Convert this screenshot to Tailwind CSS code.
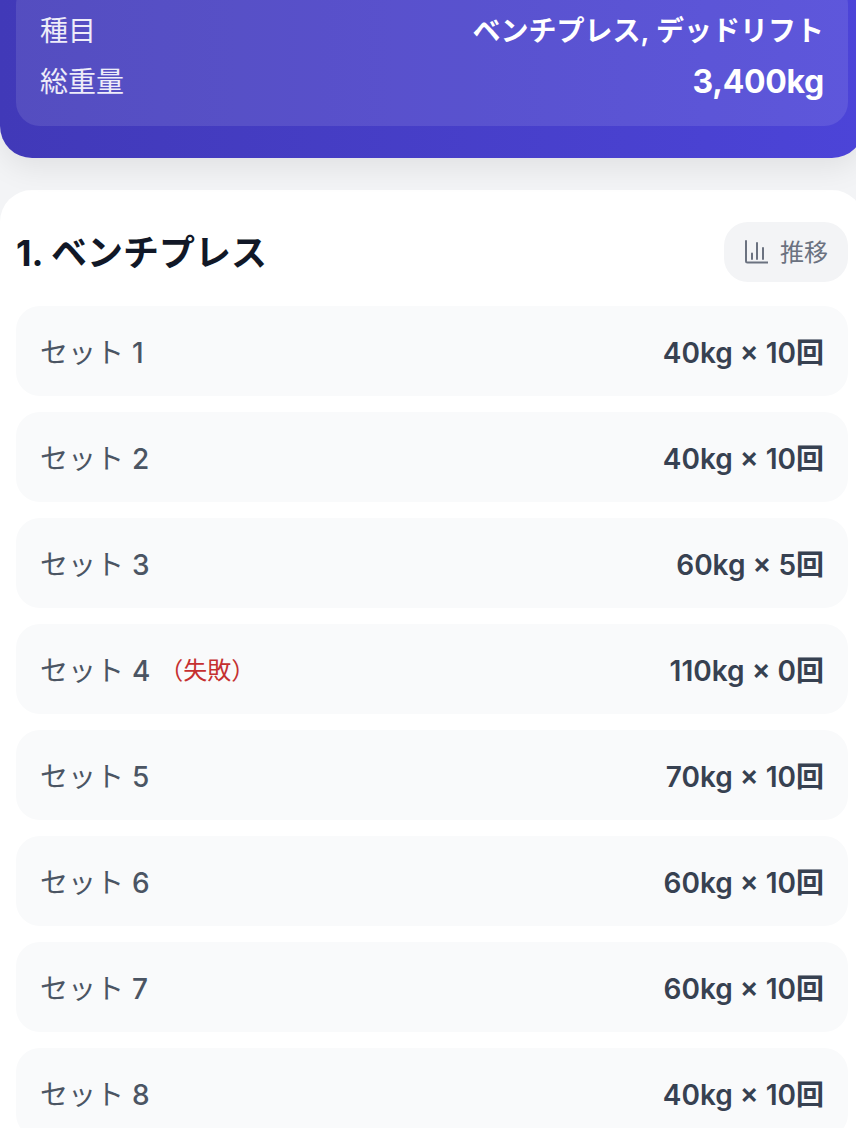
<!DOCTYPE html>
<html lang="ja">
<head>
  <meta charset="UTF-8" />
  <meta name="viewport" content="width=device-width, initial-scale=1.0" />
  <title>ワークアウト詳細</title>
  <script src="https://cdn.jsdelivr.net/npm/@tailwindcss/browser@4"></script>
</head>
<body class="bg-[#f3f4f6] h-screen overflow-hidden font-['Inter','Noto_Sans_CJK_JP',sans-serif]">
  <div class="w-[864px]">
    <header class="relative z-10 h-[158px] flex flex-col justify-end px-4 pb-8 rounded-b-[32px] overflow-hidden bg-gradient-to-r from-[#4139b8] to-[#4c44d8] shadow-[0_10px_30px_rgba(0,0,0,0.08)]">
      <div class="shrink-0 rounded-[24px] bg-white/10 px-6 pt-6 pb-[19px] text-[28px] text-white/90">
        <div class="flex items-center justify-between h-[51px]">
          <span>種目</span>
          <span class="font-semibold text-white">ベンチプレス, デッドリフト</span>
        </div>
        <div class="flex items-center justify-between h-[51px]">
          <span>総重量</span>
          <span class="text-[32px] font-bold tracking-[-0.3px] text-white">3,400kg</span>
        </div>
      </div>
    </header>

    <main class="mt-8 bg-white rounded-t-[32px] px-4 pt-8 h-[938px]">
      <div class="flex items-center justify-between h-[60px] mb-6">
        <h2 class="pt-[2px] text-[36px] font-bold text-[#111827]">1. ベンチプレス</h2>
        <button class="flex items-center gap-3 h-[60px] px-5 rounded-[24px] bg-[#f3f4f6] text-[24px] text-[#6b7280]">
          <svg class="w-6 h-6" viewBox="0 0 24 24" fill="none" stroke="currentColor" stroke-width="2" stroke-linecap="round">
            <path d="M2 1v20a1.5 1.5 0 0 0 1.5 1.5h20" />
            <path d="M8 13.5v5.5M13 3v16M19 8v11" />
          </svg>
          <span class="pt-[2px]">推移</span>
        </button>
      </div>

      <div class="flex flex-col gap-4">
        <div class="flex items-center justify-between h-[90px] pt-[3px] px-6 rounded-[24px] bg-[#f9fafb]">
          <span class="text-[28px] text-[#4b5563]">セット <span class="font-medium">1</span></span>
          <span class="text-[28px] font-semibold text-[#374151]">40kg × 10回</span>
        </div>
        <div class="flex items-center justify-between h-[90px] pt-[3px] px-6 rounded-[24px] bg-[#f9fafb]">
          <span class="text-[28px] text-[#4b5563]">セット <span class="font-medium">2</span></span>
          <span class="text-[28px] font-semibold text-[#374151]">40kg × 10回</span>
        </div>
        <div class="flex items-center justify-between h-[90px] pt-[3px] px-6 rounded-[24px] bg-[#f9fafb]">
          <span class="text-[28px] text-[#4b5563]">セット <span class="font-medium">3</span></span>
          <span class="text-[28px] font-semibold text-[#374151]">60kg × 5回</span>
        </div>
        <div class="flex items-center justify-between h-[90px] pt-[3px] px-6 rounded-[24px] bg-[#f9fafb]">
          <span class="flex items-center text-[28px] text-[#4b5563]">
            <span>セット <span class="font-medium">4</span></span>
            <span class="ml-[9px] text-[24px] text-[#c53030]">（失敗）</span>
          </span>
          <span class="text-[28px] font-semibold text-[#374151]">110kg × 0回</span>
        </div>
        <div class="flex items-center justify-between h-[90px] pt-[3px] px-6 rounded-[24px] bg-[#f9fafb]">
          <span class="text-[28px] text-[#4b5563]">セット <span class="font-medium">5</span></span>
          <span class="text-[28px] font-semibold text-[#374151]">70kg × 10回</span>
        </div>
        <div class="flex items-center justify-between h-[90px] pt-[3px] px-6 rounded-[24px] bg-[#f9fafb]">
          <span class="text-[28px] text-[#4b5563]">セット <span class="font-medium">6</span></span>
          <span class="text-[28px] font-semibold text-[#374151]">60kg × 10回</span>
        </div>
        <div class="flex items-center justify-between h-[90px] pt-[3px] px-6 rounded-[24px] bg-[#f9fafb]">
          <span class="text-[28px] text-[#4b5563]">セット <span class="font-medium">7</span></span>
          <span class="text-[28px] font-semibold text-[#374151]">60kg × 10回</span>
        </div>
        <div class="flex items-center justify-between h-[90px] pt-[3px] px-6 rounded-[24px] bg-[#f9fafb]">
          <span class="text-[28px] text-[#4b5563]">セット <span class="font-medium">8</span></span>
          <span class="text-[28px] font-semibold text-[#374151]">40kg × 10回</span>
        </div>
      </div>
    </main>
  </div>
</body>
</html>
